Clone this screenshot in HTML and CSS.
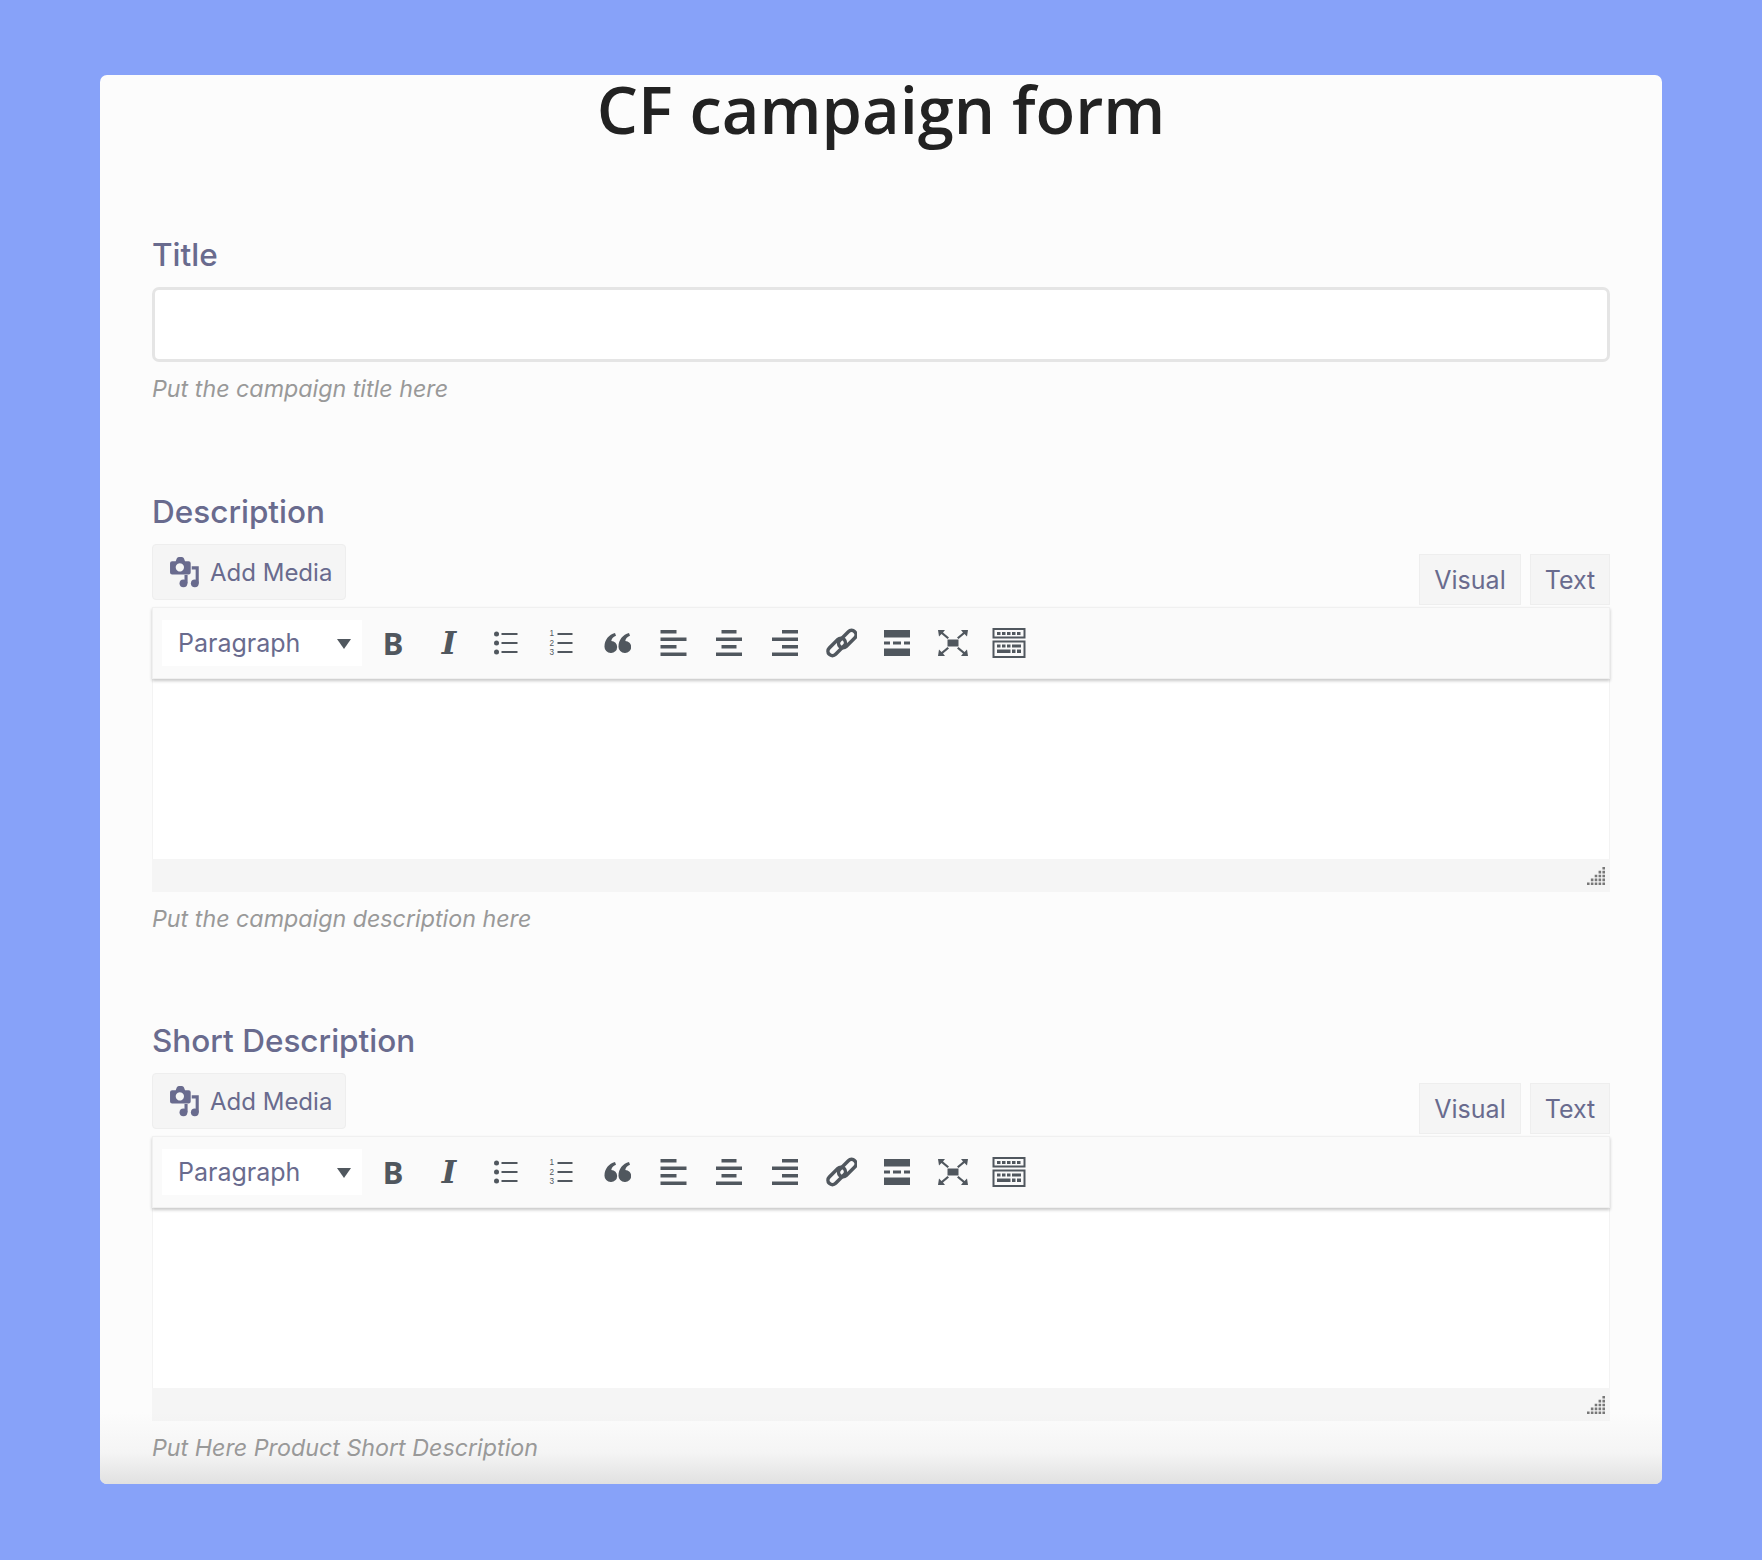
FILE: index.html
```html
<!DOCTYPE html>
<html lang="en">
<head>
  <meta charset="utf-8">
  <title>CF campaign form</title>
  <link rel="stylesheet" href="styles.css">
</head>
<body>
  <!-- toolbar icons, reused by both editors -->
  <svg class="sprite" xmlns="http://www.w3.org/2000/svg">
    <symbol id="i-media" viewBox="0 0 30 30">
      <path fill-rule="evenodd" d="M3 4h3.500l1-2.500Q8 0 9.500 0h3q1.500 0 2 1.500l1 2.500H19q2 0 2 2v9q0 2-2 2H3q-2 0-2-2V6q0-2 2-2zM10.500 6a4 4 0 1 0 .01 0z"/>
      <circle cx="14" cy="25.500" r="3.800"/><circle cx="25" cy="25.500" r="3.800"/>
      <path d="M22 9h6.800v16.500h-3V12H22zM15 17.500h3v8h-3z"/>
    </symbol>
    <symbol id="i-ul" viewBox="0 0 28 28">
      <circle cx="5.500" cy="5" r="2.500"/><circle cx="5.500" cy="14" r="2.500"/><circle cx="5.500" cy="23" r="2.500"/>
      <path d="M10.500 4h16v2h-16zM10.500 13h16v2h-16zM10.500 22h16v2h-16z"/>
    </symbol>
    <symbol id="i-quote" viewBox="0 0 28 28">
      <path transform="translate(1 0)" d="M7 24a6.300 6.300 0 0 1-6.500-6.800C.5 11 5 5.500 11 4l1 2.800C9 8 7.500 10 7.300 12A6 6 0 0 1 7 24zM21 24a6.300 6.300 0 0 1-6.500-6.800C14.500 11 19 5.500 25 4l1 2.800C23 8 21.500 10 21.300 12A6 6 0 0 1 21 24z"/>
    </symbol>
    <symbol id="i-left" viewBox="0 0 28 28">
      <path d="M1.500 1h16v3.500h-16zM1.500 8.500h26V12h-26zM1.500 16h16v3.500h-16zM1.500 23.500h26V27h-26z"/>
    </symbol>
    <symbol id="i-center" viewBox="0 0 28 28">
      <path d="M6.500 1h15v3.500h-15zM1 8.500h26V12H1zM6.500 16h15v3.500h-15zM1 23.500h26V27H1z"/>
    </symbol>
    <symbol id="i-right" viewBox="0 0 28 28">
      <path d="M11 1h16v3.500H11zM1 8.500h26V12H1zM11 16h16v3.500H11zM1 23.500h26V27H1z"/>
    </symbol>
    <symbol id="i-link" viewBox="0 0 32 32">
      <g class="link-stroke" transform="translate(1 0) rotate(-45 16 16)">
        <rect x="-1" y="10.500" width="21" height="9" rx="4.500"/>
        <rect x="12" y="12.500" width="21" height="9" rx="4.500"/>
      </g>
    </symbol>
    <symbol id="i-more" viewBox="0 0 28 28">
      <path d="M1 1h26v7.500H1zM1 12.500h6v3H1zM10 12.500h8v3h-8zM21 12.500h6v3h-6zM1 19.500h26V27H1z"/>
    </symbol>
    <symbol id="i-full" viewBox="0 0 32 28">
      <path d="M10.500 10.500h11v7h-11z"/>
      <path d="M1 1h7L6 3.500l6 5-1.500 1.500-6-5L2 7.500zM31 1h-7l2 2.500-6 5 1.500 1.500 6-5L30 7.500zM1 27h7l-2-2.500 6-5-1.500-1.500-6 5L2 20.500zM31 27h-7l2-2.500-6-5 1.500-1.500 6 5 2.500-2.500z"/>
    </symbol>
    <symbol id="i-sink" viewBox="0 0 34 30">
      <path fill-rule="evenodd" d="M.5 0h33v10.500H.5zM2.500 2v6.500h29V2zM.5 12.500h33V30H.5zM2.500 14.500V28h29V14.500z"/>
      <path d="M5 4h3.500v3H5zM10 4h3.500v3H10zM15 4h3.500v3H15zM20 4h3.500v3H20zM25 4h3.500v3H25zM5 16.500h3.500v3H5zM10 16.500h3.500v3H10zM15 16.500h3.500v3H15zM20 16.500h9v3h-9zM5 21.500h13.500v3.500H5zM20 21.500h3.500v3.500H20zM25 21.500h4v3.500h-4z"/>
    </symbol>
    <symbol id="i-grip" viewBox="2 0 14 14">
      <path d="M14 0h2v2h-2zM11 3h2v2h-2zM14 3h2v2h-2zM8 6h2v2H8zM11 6h2v2h-2zM14 6h2v2h-2zM5 9h2v2H5zM8 9h2v2H8zM11 9h2v2h-2zM14 9h2v2h-2zM2 12h2v2H2zM5 12h2v2H5zM8 12h2v2H8zM11 12h2v2h-2zM14 12h2v2h-2z"/>
    </symbol>
  </svg>

  <main class="card">
    <h1 class="page-title">CF campaign form</h1>

    <section class="field field-title">
      <label class="field-label">Title</label>
      <input class="text-input" type="text">
      <p class="hint">Put the campaign title here</p>
    </section>

    <section class="field field-editor">
      <label class="field-label">Description</label>
      <div class="editor-head">
        <button class="media-btn"><svg class="media-icon"><use href="#i-media"/></svg>Add Media</button>
        <div class="tabs">
          <button class="tab">Visual</button>
          <button class="tab">Text</button>
        </div>
      </div>
      <div class="toolbar">
        <div class="format-select">Paragraph<span class="caret"></span></div>
        <span class="tool tool-b">B</span>
        <span class="tool tool-i">I</span>
        <span class="tool"><svg class="ico"><use href="#i-ul"/></svg></span>
        <span class="tool">
          <svg class="ico" viewBox="0 0 28 28">
            <text class="ol-num" x="2.500" y="7">1</text>
            <text class="ol-num" x="2.500" y="16.500">2</text>
            <text class="ol-num" x="2.500" y="26">3</text>
            <path d="M10.500 4h15v2h-15zM10.500 13h15v2h-15zM10.500 22h15v2h-15z"/>
          </svg>
        </span>
        <span class="tool"><svg class="ico"><use href="#i-quote"/></svg></span>
        <span class="tool"><svg class="ico"><use href="#i-left"/></svg></span>
        <span class="tool"><svg class="ico"><use href="#i-center"/></svg></span>
        <span class="tool"><svg class="ico"><use href="#i-right"/></svg></span>
        <span class="tool"><svg class="ico ico-link"><use href="#i-link"/></svg></span>
        <span class="tool"><svg class="ico"><use href="#i-more"/></svg></span>
        <span class="tool"><svg class="ico ico-full"><use href="#i-full"/></svg></span>
        <span class="tool"><svg class="ico ico-sink"><use href="#i-sink"/></svg></span>
      </div>
      <div class="editor-body"></div>
      <div class="status-bar"><svg class="grip"><use href="#i-grip"/></svg></div>
      <p class="hint">Put the campaign description here</p>
    </section>

    <section class="field field-editor">
      <label class="field-label">Short Description</label>
      <div class="editor-head">
        <button class="media-btn"><svg class="media-icon"><use href="#i-media"/></svg>Add Media</button>
        <div class="tabs">
          <button class="tab">Visual</button>
          <button class="tab">Text</button>
        </div>
      </div>
      <div class="toolbar">
        <div class="format-select">Paragraph<span class="caret"></span></div>
        <span class="tool tool-b">B</span>
        <span class="tool tool-i">I</span>
        <span class="tool"><svg class="ico"><use href="#i-ul"/></svg></span>
        <span class="tool">
          <svg class="ico" viewBox="0 0 28 28">
            <text class="ol-num" x="2.500" y="7">1</text>
            <text class="ol-num" x="2.500" y="16.500">2</text>
            <text class="ol-num" x="2.500" y="26">3</text>
            <path d="M10.500 4h15v2h-15zM10.500 13h15v2h-15zM10.500 22h15v2h-15z"/>
          </svg>
        </span>
        <span class="tool"><svg class="ico"><use href="#i-quote"/></svg></span>
        <span class="tool"><svg class="ico"><use href="#i-left"/></svg></span>
        <span class="tool"><svg class="ico"><use href="#i-center"/></svg></span>
        <span class="tool"><svg class="ico"><use href="#i-right"/></svg></span>
        <span class="tool"><svg class="ico ico-link"><use href="#i-link"/></svg></span>
        <span class="tool"><svg class="ico"><use href="#i-more"/></svg></span>
        <span class="tool"><svg class="ico ico-full"><use href="#i-full"/></svg></span>
        <span class="tool"><svg class="ico ico-sink"><use href="#i-sink"/></svg></span>
      </div>
      <div class="editor-body"></div>
      <div class="status-bar"><svg class="grip"><use href="#i-grip"/></svg></div>
      <p class="hint">Put Here Product Short Description</p>
    </section>

    <div class="card-fade"></div>
  </main>
</body>
</html>
```

FILE: styles.css
```css
* { box-sizing: border-box; }
html, body { height: 1560px; overflow: hidden; }
body { margin: 0; padding: 75px 100px 0; background-color: #87a2f9; font-family: Inter, sans-serif; color: #696b8e; }
.sprite { position: absolute; width: 0; height: 0; }

.card { position: relative; height: 1409px; padding: 0 52px; background-color: #fcfcfc; border-radius: 7px; }
.card-fade { position: absolute; left: 0; right: 0; bottom: 0; height: 90px; border-radius: 0 0 7px 7px; background: linear-gradient(rgba(222,222,222,0) 20%, rgba(222,222,222,.25) 65%, rgba(222,222,222,.9)); }
.page-title { margin: 0; height: 75px; font-family: "Open Sans", sans-serif; font-size: 65px; line-height: 68px; font-weight: 600; text-align: center; color: #222; }

.field-label { display: block; font-size: 31.500px; line-height: 36px; font-weight: 500; }
.field-title { margin-top: 87px; }
.field-editor { margin-top: 90px; }
.field-editor + .field-editor { margin-top: 89px; }
.text-input { display: block; width: 100%; height: 75px; margin-top: 14px; background: #fff; border: 3px solid #e5e5e5; border-radius: 7px; }
.hint { position: relative; z-index: 1; margin: 12px 0 0; font-size: 23.250px; line-height: 30px; font-style: italic; color: #999; }

.editor-head { display: flex; justify-content: space-between; align-items: flex-end; margin-top: 14px; height: 63px; }
.media-btn { align-self: flex-start; display: flex; align-items: center; gap: 10px; width: 194px; height: 56px; padding: 0 0 0 16px; font: inherit; font-size: 24px; color: inherit; background: #f5f5f5; border: 1px solid #eee; border-radius: 4px; }
.media-icon { width: 31px; height: 31px; fill: #696b8e; }
.tabs { display: flex; gap: 9px; padding-bottom: 2px; }
.tab { height: 51px; padding: 0; font: inherit; font-size: 25px; color: inherit; background: #f5f5f5; border: 1px solid #eee; }
.tab:first-child { width: 102px; }
.tab:last-child { width: 80px; }

.toolbar { position: relative; display: flex; align-items: center; height: 72px; padding-left: 9px; background: #fafafa; border: 1px solid #f0f0f0; box-shadow: 0 2px 3px rgba(0,0,0,.22); }
.format-select { position: relative; width: 200px; height: 46px; padding-left: 16px; font-size: 25px; line-height: 46px; background: #fff; }
.caret { position: absolute; right: 11px; top: 19px; border-style: solid; border-width: 10px 7px 0; border-color: #50575e transparent transparent; }
.tool { display: flex; align-items: center; justify-content: center; width: 56px; height: 46px; color: #50575e; fill: #50575e; }
.format-select + .tool { margin-left: 3px; }
.tool-b { font: 700 31px "Noto Sans", sans-serif; }
.tool-i { font: italic 700 31px "DejaVu Serif", serif; }
.ico { width: 28px; height: 28px; }
.ico-link { width: 32px; height: 32px; }
.ico-full { width: 32px; height: 28px; }
.ico-sink { width: 34px; height: 30px; }
.ol-num { font: 8.200px "Liberation Sans", sans-serif; }
.link-stroke rect { fill: none; stroke: #50575e; stroke-width: 3.500; }

.editor-body { height: 180px; background: #fff; border: 1px solid #f3f3f3; border-top: 0; border-bottom: 0; }
.status-bar { display: flex; justify-content: flex-end; align-items: flex-end; height: 33px; padding: 0 5px 7px 0; background: #f5f5f5; }
.grip { width: 18px; height: 18px; fill: #777; }
```
